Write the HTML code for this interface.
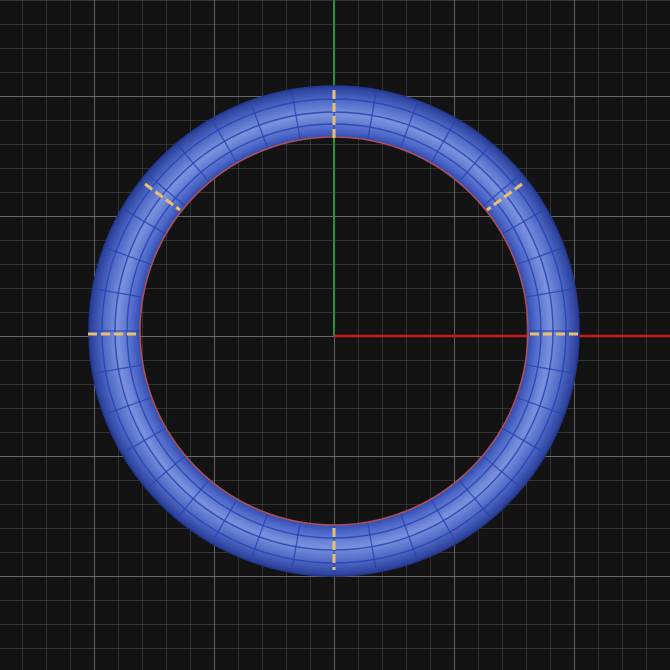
<!DOCTYPE html>
<html><head><style>html,body{margin:0;padding:0;background:#131313;width:670px;height:670px;overflow:hidden}</style></head>
<body>
<svg width="670" height="670" viewBox="0 0 670 670" xmlns="http://www.w3.org/2000/svg">
<defs>
<pattern id="minor" x="22" y="0" width="24" height="24" patternUnits="userSpaceOnUse">
<path d="M0 0V24M0 0H24" stroke="#454545" stroke-width="1.2" fill="none"/>
</pattern>
<pattern id="major" x="94" y="96" width="120" height="120" patternUnits="userSpaceOnUse">
<path d="M0 0V120M0 0H120" stroke="#808080" stroke-width="1.4" fill="none"/>
</pattern>
<radialGradient id="tube" cx="334" cy="331" r="246" gradientUnits="userSpaceOnUse">
<stop offset="0.78" stop-color="#2a44a8"/>
<stop offset="0.82" stop-color="#4d68c8"/>
<stop offset="0.88" stop-color="#7a92dc"/>
<stop offset="0.94" stop-color="#4e69c6"/>
<stop offset="1" stop-color="#263a94"/>
</radialGradient>
</defs>
<rect width="670" height="670" fill="#131313"/>
<rect width="670" height="670" fill="url(#minor)"/>
<rect width="670" height="670" fill="url(#major)"/>
<line x1="334" y1="0" x2="334" y2="336" stroke="#1f9a2a" stroke-width="2"/>
<line x1="334" y1="336" x2="670" y2="336" stroke="#d01818" stroke-width="2.5"/>
<circle cx="334" cy="331" r="220" fill="none" stroke="url(#tube)" stroke-width="51"/>
<g fill="none" stroke="#2843b0" stroke-width="1.4" opacity="0.85">
<circle cx="334" cy="331" r="207"/>
<circle cx="334" cy="331" r="219"/>
<circle cx="334" cy="331" r="232"/>
</g>
<g stroke="#2843b0" stroke-width="1.3" opacity="0.8">
<line x1="529" y1="331" x2="578" y2="331" transform="rotate(0 334 331)"/>
<line x1="529" y1="331" x2="578" y2="331" transform="rotate(10 334 331)"/>
<line x1="529" y1="331" x2="578" y2="331" transform="rotate(20 334 331)"/>
<line x1="529" y1="331" x2="578" y2="331" transform="rotate(30 334 331)"/>
<line x1="529" y1="331" x2="578" y2="331" transform="rotate(40 334 331)"/>
<line x1="529" y1="331" x2="578" y2="331" transform="rotate(50 334 331)"/>
<line x1="529" y1="331" x2="578" y2="331" transform="rotate(60 334 331)"/>
<line x1="529" y1="331" x2="578" y2="331" transform="rotate(70 334 331)"/>
<line x1="529" y1="331" x2="578" y2="331" transform="rotate(80 334 331)"/>
<line x1="529" y1="331" x2="578" y2="331" transform="rotate(90 334 331)"/>
<line x1="529" y1="331" x2="578" y2="331" transform="rotate(100 334 331)"/>
<line x1="529" y1="331" x2="578" y2="331" transform="rotate(110 334 331)"/>
<line x1="529" y1="331" x2="578" y2="331" transform="rotate(120 334 331)"/>
<line x1="529" y1="331" x2="578" y2="331" transform="rotate(130 334 331)"/>
<line x1="529" y1="331" x2="578" y2="331" transform="rotate(140 334 331)"/>
<line x1="529" y1="331" x2="578" y2="331" transform="rotate(150 334 331)"/>
<line x1="529" y1="331" x2="578" y2="331" transform="rotate(160 334 331)"/>
<line x1="529" y1="331" x2="578" y2="331" transform="rotate(170 334 331)"/>
<line x1="529" y1="331" x2="578" y2="331" transform="rotate(180 334 331)"/>
<line x1="529" y1="331" x2="578" y2="331" transform="rotate(190 334 331)"/>
<line x1="529" y1="331" x2="578" y2="331" transform="rotate(200 334 331)"/>
<line x1="529" y1="331" x2="578" y2="331" transform="rotate(210 334 331)"/>
<line x1="529" y1="331" x2="578" y2="331" transform="rotate(220 334 331)"/>
<line x1="529" y1="331" x2="578" y2="331" transform="rotate(230 334 331)"/>
<line x1="529" y1="331" x2="578" y2="331" transform="rotate(240 334 331)"/>
<line x1="529" y1="331" x2="578" y2="331" transform="rotate(250 334 331)"/>
<line x1="529" y1="331" x2="578" y2="331" transform="rotate(260 334 331)"/>
<line x1="529" y1="331" x2="578" y2="331" transform="rotate(270 334 331)"/>
<line x1="529" y1="331" x2="578" y2="331" transform="rotate(280 334 331)"/>
<line x1="529" y1="331" x2="578" y2="331" transform="rotate(290 334 331)"/>
<line x1="529" y1="331" x2="578" y2="331" transform="rotate(300 334 331)"/>
<line x1="529" y1="331" x2="578" y2="331" transform="rotate(310 334 331)"/>
<line x1="529" y1="331" x2="578" y2="331" transform="rotate(320 334 331)"/>
<line x1="529" y1="331" x2="578" y2="331" transform="rotate(330 334 331)"/>
<line x1="529" y1="331" x2="578" y2="331" transform="rotate(340 334 331)"/>
<line x1="529" y1="331" x2="578" y2="331" transform="rotate(350 334 331)"/>
</g>
<circle cx="334" cy="331" r="194" fill="none" stroke="#b0505a" stroke-width="1.5"/>
<circle cx="334" cy="331" r="245" fill="none" stroke="#223890" stroke-width="1.5"/>
<g stroke="#e8c070" stroke-width="3" stroke-dasharray="9 4">
<line x1="334" y1="90" x2="334" y2="140"/>
<line x1="334" y1="528" x2="334" y2="570"/>
<line x1="88" y1="334" x2="138" y2="334"/>
<line x1="530" y1="334" x2="580" y2="334"/>
<line x1="145" y1="184" x2="180" y2="210"/>
<line x1="522" y1="184" x2="487" y2="210"/>
</g>
</svg>
</body></html>
